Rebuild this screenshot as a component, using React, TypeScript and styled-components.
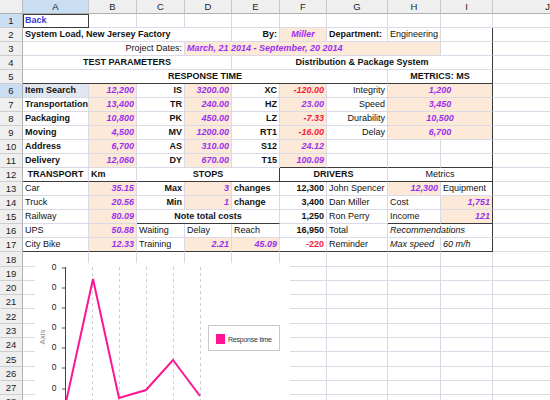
import React from "react";
import styled, { createGlobalStyle, css } from "styled-components";

const GlobalStyle = createGlobalStyle`
  body {
    margin: 0;
    background: #ffffff;
    font-family: "Liberation Sans", Arial, sans-serif;
    overflow: hidden;
  }
`;

const GRID = "#d9dae6";
const DARK = "#3a3a3a";
const PEACH = "#fce9d7";
const PURPLE = "#9a30f0";
const RED = "#f01e3c";

const Sheet = styled.div`
  position: relative;
  display: grid;
  grid-template-columns: 23px 66px 48px 48px 47px 48px 47px 61px 53px 52px 110px;
  grid-template-rows:
    14px repeat(17, 14px) 15px 14px 14px 14px 15px 14px 14px 15px 14px 14px
    14px;
  width: 550px;
  height: 400px;
  overflow: hidden;
  font-size: 9px;
  color: #111;
`;

const Corner = styled.div`
  background: #efefef;
  border-right: 1px solid #bdbdbd;
  border-bottom: 1px solid #b0b0b0;
`;

const ColHead = styled.div<{ $active?: boolean }>`
  display: flex;
  align-items: center;
  justify-content: center;
  background: ${(p) => (p.$active ? "#c9ddf3" : "#efefef")};
  border-right: 1px solid #c8c8c8;
  border-bottom: 1px solid #b0b0b0;
  font-size: 9.5px;
  color: #222;
`;

const RowHead = styled.div<{ $active?: boolean }>`
  display: flex;
  align-items: center;
  justify-content: center;
  background: ${(p) => (p.$active ? "#c9ddf3" : "#efefef")};
  border-right: 1px solid #b0b0b0;
  border-bottom: 1px solid #cdcdcd;
  font-size: 9.5px;
  color: #222;
`;

type Tone = "purple" | "red" | "blue";

const Cell = styled.div<{
  $span: number;
  $align: "l" | "c" | "r";
  $bold?: boolean;
  $italic?: boolean;
  $tone?: Tone;
  $fill?: "peach" | "hl";
  $bb?: boolean;
  $br?: boolean;
  $sel?: boolean;
}>`
  grid-column: span ${(p) => p.$span};
  display: flex;
  align-items: center;
  justify-content: ${(p) =>
    p.$align === "r" ? "flex-end" : p.$align === "c" ? "center" : "flex-start"};
  padding: 0 2px;
  min-width: 0;
  white-space: nowrap;
  overflow: visible;
  line-height: 13px;
  border-right: 1px solid ${(p) => (p.$br ? DARK : GRID)};
  border-bottom: 1px solid ${(p) => (p.$bb ? DARK : GRID)};
  font-weight: ${(p) => (p.$bold ? 700 : 400)};
  font-style: ${(p) => (p.$italic ? "italic" : "normal")};
  color: ${(p) =>
    p.$tone === "purple"
      ? PURPLE
      : p.$tone === "red"
      ? RED
      : p.$tone === "blue"
      ? "#3a3ad4"
      : "#111"};
  background: ${(p) =>
    p.$fill === "peach" ? PEACH : p.$fill === "hl" ? "#e1e7f0" : "transparent"};
  ${(p) =>
    p.$sel &&
    css`
      border-right-color: ${DARK};
      border-bottom-color: ${DARK};
      box-shadow: inset 1px 1px 0 ${DARK};
    `}
`;

const ChartBox = styled.div`
  position: absolute;
  left: 35px;
  top: 263px;
  width: 255px;
  height: 137px;
  background: #ffffff;
`;

type C = {
  t?: string;
  s?: number;
  a?: "l" | "c" | "r";
  b?: boolean;
  i?: boolean;
  tone?: Tone;
  fill?: "peach" | "hl";
  bb?: boolean;
  br?: boolean;
  sel?: boolean;
};

const P = (t: string, extra: C = {}): C => ({
  t,
  a: "r",
  b: true,
  i: true,
  tone: "purple",
  fill: "peach",
  ...extra,
});
const R = (t: string, extra: C = {}): C => P(t, { tone: "red", ...extra });
const B = (t: string, a: "l" | "c" | "r" = "l", extra: C = {}): C => ({ t, a, b: true, ...extra });
const T = (t: string, a: "l" | "c" | "r" = "l", extra: C = {}): C => ({ t, a, ...extra });
const E: C = {};

const rows: C[][] = [
  [{ t: "Back", tone: "blue", b: true, sel: true }, E, E, E, E, E, E, E, E, E],
  [
    B("System Load, New Jersey Factory", "l", { s: 4 }),
    B("By:", "r"),
    P("Miller", { a: "c" }),
    B("Department:"),
    T("Engineering"),
    E,
    E,
  ],
  [
    T("Project Dates:", "r", { s: 3 }),
    P("March, 21 2014 - September, 20 2014", { a: "l", s: 5 }),
    E,
    E,
  ],
  [
    B("TEST PARAMETERS", "c", { s: 4 }),
    B("Distribution & Package System", "c", { s: 5 }),
    E,
  ],
  [
    B("RESPONSE TIME", "c", { s: 7, bb: true }),
    B("METRICS: MS", "c", { s: 2, bb: true }),
    E,
  ],
  [
    B("Item Search", "l", { fill: "hl" }),
    P("12,200"),
    B("IS", "r"),
    P("3200.00"),
    B("XC", "r"),
    R("-120.00"),
    T("Integrity", "r"),
    P("1,200", { a: "c", s: 2 }),
    E,
  ],
  [
    B("Transportation"),
    P("13,400"),
    B("TR", "r"),
    P("240.00"),
    B("HZ", "r"),
    P("23.00"),
    T("Speed", "r"),
    P("3,450", { a: "c", s: 2 }),
    E,
  ],
  [
    B("Packaging"),
    P("10,800"),
    B("PK", "r"),
    P("450.00"),
    B("LZ", "r"),
    R("-7.33"),
    T("Durability", "r"),
    P("10,500", { a: "c", s: 2 }),
    E,
  ],
  [
    B("Moving"),
    P("4,500"),
    B("MV", "r"),
    P("1200.00"),
    B("RT1", "r"),
    R("-16.00"),
    T("Delay", "r"),
    P("6,700", { a: "c", s: 2 }),
    E,
  ],
  [B("Address"), P("6,700"), B("AS", "r"), P("310.00"), B("S12", "r"), P("24.12"), E, E, E, E],
  [
    B("Delivery"),
    P("12,060"),
    B("DY", "r"),
    P("670.00"),
    B("T15", "r"),
    P("100.09", { bb: true }),
    { bb: true },
    { bb: true },
    { bb: true },
    E,
  ],
  [
    B("TRANSPORT", "c", { bb: true }),
    B("Km", "l", { bb: true }),
    B("STOPS", "c", { s: 3, bb: true, br: true }),
    B("DRIVERS", "c", { s: 2, bb: true }),
    T("Metrics", "c", { s: 2, bb: true }),
    E,
  ],
  [
    T("Car"),
    P("35.15"),
    B("Max", "r"),
    P("3"),
    B("changes"),
    B("12,300", "r"),
    T("John Spencer"),
    P("12,300"),
    T("Equipment"),
    E,
  ],
  [
    T("Truck"),
    P("20.56"),
    B("Min", "r"),
    P("1"),
    B("change"),
    B("3,400", "r"),
    T("Dan Miller"),
    T("Cost"),
    P("1,751"),
    E,
  ],
  [
    T("Railway"),
    P("80.09"),
    B("Note total costs", "c", { s: 3, bb: true }),
    B("1,250", "r"),
    T("Ron Perry"),
    T("Income", "l", { bb: true }),
    P("121", { bb: true }),
    E,
  ],
  [
    T("UPS"),
    P("50.88"),
    T("Waiting"),
    T("Delay"),
    T("Reach"),
    B("16,950", "r"),
    T("Total"),
    T("Recommendations", "l", { i: true, s: 2 }),
    E,
  ],
  [
    T("City Bike", "l", { bb: true }),
    P("12.33", { bb: true }),
    T("Training", "l", { bb: true }),
    P("2.21", { bb: true }),
    P("45.09", { bb: true }),
    { t: "-220", a: "r", b: true, tone: "red", bb: true },
    T("Reminder", "l", { bb: true }),
    T("Max speed", "l", { i: true, bb: true }),
    T("60 m/h", "l", { i: true, bb: true }),
    E,
  ],
];

for (let r = 18; r <= 28; r++) rows.push(Array.from({ length: 10 }, () => ({})));

const letters = ["A", "B", "C", "D", "E", "F", "G", "H", "I", "J"];
const ticks = [5, 25, 45, 65, 85, 105, 126];
const grids = [57, 84, 111, 138, 165];

const ResponseChart = () => (
  <ChartBox>
    <svg width="255" height="137" viewBox="0 0 255 137">
      <text
        x="8"
        y="74"
        transform="rotate(-90 8 74)"
        textAnchor="middle"
        dominantBaseline="middle"
        fontSize="8"
        fill="#8a8a8a"
        fontFamily="Liberation Sans, Arial, sans-serif"
      >
        Axis
      </text>
      {ticks.map((y) => (
        <g key={y}>
          <text
            x="19"
            y={y}
            textAnchor="middle"
            dominantBaseline="middle"
            fontSize="8.5"
            fill="#222"
            fontFamily="Liberation Sans, Arial, sans-serif"
          >
            0
          </text>
          <line x1="27" x2="30" y1={y} y2={y} stroke="#555" strokeWidth="1" />
        </g>
      ))}
      {grids.map((x) => (
        <line
          key={x}
          x1={x + 0.5}
          x2={x + 0.5}
          y1="4"
          y2="137"
          stroke="#cfcfcf"
          strokeWidth="1"
          strokeDasharray="3 3"
        />
      ))}
      <line x1="30.5" x2="30.5" y1="4" y2="137" stroke="#444" strokeWidth="1" />
      <polyline
        points="31,139 58,16 84,135 111,127 138,97 165,133"
        fill="none"
        stroke="#ff1493"
        strokeWidth="2"
        strokeLinejoin="miter"
      />
      <rect x="173.5" y="62.5" width="71" height="25" fill="#fff" stroke="#c8c8c8" />
      <rect x="181" y="71" width="9" height="10" fill="#ff1493" />
      <text
        x="193"
        y="77"
        dominantBaseline="middle"
        fontSize="7"
        textLength="44"
        fill="#333"
        fontFamily="Liberation Sans, Arial, sans-serif"
      >
        Response time
      </text>
    </svg>
  </ChartBox>
);

export default function App() {
  return (
    <>
      <GlobalStyle />
      <Sheet>
        <Corner />
        {letters.map((l) => (
          <ColHead key={l} $active={l === "A"}>
            {l}
          </ColHead>
        ))}
        {rows.map((cells, ri) => {
          const rowNo = ri + 1;
          let col = 0;
          return (
            <React.Fragment key={rowNo}>
              <RowHead $active={rowNo === 1 || rowNo === 6}>{rowNo}</RowHead>
              {cells.map((c, ci) => {
                const span = c.s ?? 1;
                const end = col + span - 1;
                col += span;
                const edge = rowNo >= 2 && rowNo <= 17 && end === 8;
                return (
                  <Cell
                    key={ci}
                    $span={span}
                    $align={c.a ?? "l"}
                    $bold={c.b}
                    $italic={c.i}
                    $tone={c.tone}
                    $fill={c.fill}
                    $bb={c.bb}
                    $br={c.br || edge}
                    $sel={c.sel}
                  >
                    {c.t}
                  </Cell>
                );
              })}
            </React.Fragment>
          );
        })}
        <ResponseChart />
      </Sheet>
    </>
  );
}
